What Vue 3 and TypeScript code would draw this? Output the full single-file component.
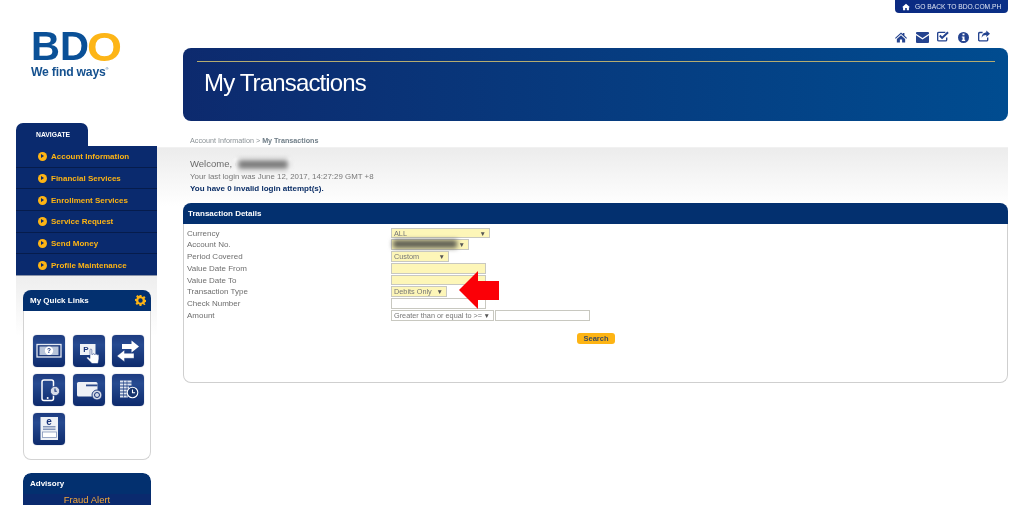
<script setup lang="ts">
// BDO online banking - My Transactions screen
const navItems: string[] = [
  'Account Information',
  'Financial Services',
  'Enrollment Services',
  'Service Request',
  'Send Money',
  'Profile Maintenance',
]

interface FormRow {
  label: string
  kind: 'select' | 'input' | 'hidden' | 'amount'
  value?: string
  width: number
  white?: boolean
}

const rows: FormRow[] = [
  { label: 'Currency', kind: 'select', value: 'ALL', width: 99 },
  { label: 'Account No.', kind: 'hidden', width: 78 },
  { label: 'Period Covered', kind: 'select', value: 'Custom', width: 58 },
  { label: 'Value Date From', kind: 'input', width: 95 },
  { label: 'Value Date To', kind: 'input', width: 95 },
  { label: 'Transaction Type', kind: 'select', value: 'Debits Only', width: 56 },
  { label: 'Check Number', kind: 'input', width: 95, white: true },
  { label: 'Amount', kind: 'amount', value: 'Greater than or equal to >=', width: 103, white: true },
]
</script>

<template>
  <div class="page">
    <div class="top-row">
      <a class="back-link">
        <svg class="back-icon" viewBox="0 0 12 10"><path d="M6 0 12 5.2H10.4V10H7.2V6.6H4.8V10H1.6V5.2H0Z" /></svg>
        GO BACK TO BDO.COM.PH
      </a>
    </div>

    <div class="layout">
      <aside class="left">
        <div class="logo">
          <svg class="logo-mark" viewBox="0 0 95 41">
            <text x="0" y="36" class="bd" textLength="58" lengthAdjust="spacingAndGlyphs">BD</text>
            <text x="56" y="36.500" class="o" textLength="35" lengthAdjust="spacingAndGlyphs">O</text>
          </svg>
          <div class="logo-tag">We find ways<sup>®</sup></div>
        </div>

        <div class="nav-tab">NAVIGATE</div>
        <ul class="nav">
          <li v-for="item in navItems" :key="item">
            <span class="bullet"></span>{{ item }}
          </li>
        </ul>

        <div class="left-panels">
          <section class="quick">
            <h3 class="side-head">
              My Quick Links
              <svg class="gear" viewBox="0 0 12 12">
                <path fill-rule="evenodd" d="M5 0h2l.3 1.7 1.2.5L10 1.2l1.4 1.4-1 1.5.5 1.2 1.700.3v2l-1.700.3-.5 1.200 1 1.500L10 10.800l-1.500-1-1.200.5L7 12H5l-.3-1.700-1.200-.5-1.500 1L.6 9.400l1-1.500-.5-1.200L0 6.400v-2l1.700-.2.5-1.200-1-1.500L2.600.1l1.500 1 .6 0ZM6 3.600a2.400 2.400 0 1 0 0 4.800 2.400 2.400 0 0 0 0-4.800Z" />
              </svg>
            </h3>
            <div class="tiles">
              <svg class="tile" viewBox="0 0 32 32">
                <rect x="4" y="9.500" width="24" height="12.500" fill="#1d3a7c" stroke="#e4e9f2" stroke-width="1.300" />
                <rect x="6.500" y="11.500" width="19" height="8.500" fill="#b7c4da" />
                <circle cx="16" cy="15.700" r="4.200" fill="#fff" />
                <text x="16" y="18.200" class="tile-q">?</text>
              </svg>
              <svg class="tile" viewBox="0 0 32 32">
                <rect x="7" y="9" width="15.500" height="11" fill="#eef1f6" />
                <text x="13" y="17" class="tile-p">P</text>
                <path d="M17 15c0-1.300 1.800-1.300 1.800 0v4.500l.9-.1c.3-1 1.600-.9 1.700 0l.8.1c.3-.9 1.500-.8 1.600.1l.7.2c.4-.6 1.400-.3 1.400.5v3.700L25 28.500h-6L14 23.500c-.9-1 .5-2.200 1.500-1.300l1.500 1.300Z" fill="#fff" stroke="#17337a" stroke-width=".5" />
              </svg>
              <svg class="tile" viewBox="0 0 32 32">
                <path d="M10 9h9.500V5.500L27 11.500l-7.500 6V14H10Z" fill="#fff" />
                <path d="M22 18.300h-9.500V15L5 21l7.500 5.800V23.300H22Z" fill="#fff" stroke="#1b3a7e" stroke-width=".4" />
              </svg>
              <svg class="tile" viewBox="0 0 32 32">
                <rect x="9" y="6" width="11.500" height="20.500" rx="2" fill="none" stroke="#fff" stroke-width="1.500" />
                <circle cx="14.700" cy="24" r="1" fill="#fff" />
                <circle cx="22" cy="17" r="4.700" fill="#d5dbe7" stroke="#17337a" stroke-width=".8" />
                <path d="M22 14.500v2.800h1.800" fill="none" stroke="#17337a" stroke-width="1.100" />
              </svg>
              <svg class="tile" viewBox="0 0 32 32">
                <rect x="4" y="8" width="20.500" height="14.500" rx="1.500" fill="#eef1f6" />
                <rect x="13" y="10.500" width="11.500" height="1.800" fill="#2c4a8a" />
                <circle cx="24" cy="21" r="5" fill="#d5dbe7" stroke="#17337a" stroke-width=".9" />
                <circle cx="24" cy="21" r="2.500" fill="none" stroke="#17337a" stroke-width="1" />
              </svg>
              <svg class="tile" viewBox="0 0 32 32">
                <path d="M8 7.500h11.500M8 10.500h11.500M8 13.500h9M8 16.500h7M8 19.500h7M8 22.500h8" stroke="#dfe5ef" stroke-width="2" />
                <path d="M11.500 6.500v17M15 6.500v17" stroke="#1d3a7c" stroke-width=".6" />
                <circle cx="20.500" cy="18.500" r="5.300" fill="#17356f" stroke="#fff" stroke-width="1.100" />
                <path d="M20.500 15.500v3.300h2.600" fill="none" stroke="#fff" stroke-width="1.100" />
              </svg>
              <svg class="tile" viewBox="0 0 32 32">
                <rect x="7.500" y="4" width="17.500" height="23" fill="#eef1f6" />
                <text x="16" y="11.500" class="tile-e">e</text>
                <rect x="10" y="13" width="12.500" height="1.500" fill="#8496b8" />
                <rect x="10" y="15.500" width="12.500" height="1.500" fill="#8496b8" />
                <rect x="9.500" y="19" width="14" height="5.500" fill="#fff" stroke="#8496b8" stroke-width=".8" />
              </svg>
            </div>
          </section>

          <section class="advisory">
            <h3 class="side-head">Advisory</h3>
            <div class="advisory-body">Fraud Alert</div>
          </section>
        </div>
      </aside>

      <main class="main">
        <div class="tools">
          <svg class="tool tool-home" viewBox="0 0 13 11"><path d="M6.500 0 8.500 1.800V.6h1.700v2.800L13 6l-.8.8-5.700-5-5.700 5L0 6ZM2 7 6.500 3 11 7v4H7.700V7.800H5.300V11H2Z" /></svg>
          <svg class="tool tool-mail" viewBox="0 0 13 11"><path d="M1 0h11a1 1 0 0 1 1 1v.8L6.500 6 0 1.800V1a1 1 0 0 1 1-1ZM0 3.300 6.500 7.500 13 3.300V10a1 1 0 0 1-1 1H1a1 1 0 0 1-1-1Z" /></svg>
          <svg class="tool tool-check" viewBox="0 0 13 11"><path d="M10.500 6.500V9a1.300 1.300 0 0 1-1.300 1.300H2A1.300 1.300 0 0 1 .7 9V2.300A1.300 1.300 0 0 1 2 1h7" fill="none" stroke="currentColor" stroke-width="1.500" /><path d="M3 4.500 5.500 7 12 1" fill="none" stroke="currentColor" stroke-width="2.200" /></svg>
          <svg class="tool tool-info" viewBox="0 0 11 11"><path fill-rule="evenodd" d="M5.500 0a5.500 5.500 0 1 1 0 11 5.500 5.500 0 0 1 0-11ZM4.500 1.600v1.700h2V1.600ZM3.800 4.400v1.100h.8v2.300h-.8v1.100h3.400V7.800h-.7V4.400Z" /></svg>
          <svg class="tool tool-share" viewBox="0 0 13 12"><path d="M10.500 7.500V10a1.300 1.300 0 0 1-1.300 1.300H2A1.300 1.300 0 0 1 .7 10V3.500A1.300 1.300 0 0 1 2 2.200h3" fill="none" stroke="currentColor" stroke-width="1.500" /><path d="M9 0l4 3.500L9 7V5C6.500 5 5 5.800 4 8c0-3.500 2-5.800 5-5.800Z" /></svg>
        </div>

        <div class="banner">
          <div class="banner-rule"></div>
          <h1>My Transactions</h1>
        </div>

        <div class="crumbs">Account Information &gt; <b>My Transactions</b></div>

        <div class="content">
          <div class="welcome">Welcome, c<span class="masked-name"><i></i></span></div>
          <div class="last-login">Your last login was June 12, 2017, 14:27:29 GMT +8</div>
          <div class="attempts">You have 0 invalid login attempt(s).</div>

          <section class="card">
            <h2>Transaction Details</h2>
            <div class="card-body">
              <div class="form">
                <template v-for="row in rows" :key="row.label">
                  <label>{{ row.label }}</label>
                  <div class="control">
                    <div
                      v-if="row.kind === 'input'"
                      class="field"
                      :class="{ white: row.white }"
                      :style="{ width: row.width + 'px' }"
                    ></div>
                    <div
                      v-else-if="row.kind === 'hidden'"
                      class="field pick"
                      :style="{ width: row.width + 'px' }"
                    >
                      <span class="masked-acct"></span><span class="caret">▼</span>
                    </div>
                    <template v-else>
                      <div
                        class="field pick"
                        :class="{ white: row.white }"
                        :style="{ width: row.width + 'px' }"
                      >
                        {{ row.value }}<span class="caret">▼</span>
                      </div>
                      <div v-if="row.kind === 'amount'" class="field white amount-input"></div>
                    </template>
                  </div>
                </template>
              </div>
              <div class="actions"><button type="button">Search</button></div>
            </div>

            <svg class="red-arrow" viewBox="0 0 40 38"><path d="M0 19 19 0V10H40V29H19V38Z" /></svg>
          </section>
        </div>
      </main>
    </div>
  </div>
</template>

<style scoped>
.page {
  width: 1024px;
  height: 505px;
  overflow: hidden;
  font-family: "Liberation Sans", Arial, sans-serif;
  background: #fff;
  filter: blur(0.3px);
}

.top-row {
  height: 13px;
  display: flex;
  justify-content: flex-end;
  padding-right: 16px;
}

.back-link {
  width: 113px;
  height: 13px;
  box-sizing: border-box;
  padding-left: 7px;
  display: flex;
  align-items: center;
  gap: 5px;
  background: linear-gradient(90deg, #0b2a82, #0a2f86);
  border-radius: 0 0 4px 4px;
  color: #dfe5f3;
  font-size: 6.700px;
  white-space: nowrap;
}

.back-icon {
  width: 8px;
  height: 8px;
  fill: #fff;
}

.layout {
  display: grid;
  grid-template-columns: 141px 851px;
  margin-left: 16px;
}

/* left column */
.logo {
  height: 110px;
  padding: 11px 0 0 15px;
  box-sizing: border-box;
}

.logo-mark {
  display: block;
  width: 95px;
  height: 41px;
  overflow: visible;
}

.bd,
.o {
  font-family: "Liberation Sans", Arial, sans-serif;
  font-weight: 700;
}

.bd {
  fill: #0a5097;
  font-size: 40px;
}

.o {
  fill: #fdb517;
  font-size: 41px;
}

.logo-tag {
  color: #15518f;
  font-size: 12.200px;
  font-weight: 700;
  letter-spacing: -0.2px;
  line-height: 14px;
}

.logo-tag sup {
  font-size: 4px;
  font-weight: 400;
  vertical-align: 6px;
  line-height: 0;
}

.nav-tab {
  width: 72px;
  height: 23px;
  background: #0a2a6e;
  border-radius: 7px 7px 0 0;
  color: #fff;
  font-size: 6.800px;
  font-weight: 700;
  line-height: 24px;
  padding-left: 20px;
  box-sizing: border-box;
}

.nav {
  list-style: none;
  margin: 0;
  padding: 0;
  background: #0a2a6e;
}

.nav li {
  height: 21.700px;
  box-sizing: border-box;
  padding: 1px 0 0 22px;
  display: flex;
  align-items: center;
  gap: 4px;
  color: #fdb414;
  font-size: 8px;
  font-weight: 700;
  border-bottom: 1px solid #061c4c;
}

.nav li:last-child {
  border-bottom: 1px solid #8a93a8;
}

.bullet {
  width: 9px;
  height: 9px;
  border-radius: 50%;
  background: #fdb414;
  position: relative;
}

.bullet::after {
  content: "";
  position: absolute;
  left: 3.200px;
  top: 1.800px;
  border-left: 3.800px solid #0a2a6e;
  border-top: 2.700px solid transparent;
  border-bottom: 2.700px solid transparent;
}

.left-panels {
  padding: 14px 6px 0 7px;
  background: linear-gradient(#eeeeee, #fff 60px);
}

.side-head {
  margin: 0;
  height: 21px;
  box-sizing: border-box;
  padding: 0 7px;
  display: flex;
  align-items: center;
  justify-content: space-between;
  background: #03306f;
  border-radius: 8px 8px 0 0;
  color: #fff;
  font-size: 8px;
  font-weight: 700;
}

.gear {
  width: 11px;
  height: 11px;
  fill: #fdb414;
  margin-right: -2px;
}

.tiles {
  height: 149px;
  box-sizing: border-box;
  background: #fff;
  border: 1px solid #d3d3d3;
  border-top: 0;
  border-radius: 0 0 8px 8px;
  display: grid;
  grid-template-columns: repeat(3, 32px);
  grid-auto-rows: 32px;
  column-gap: 7.500px;
  row-gap: 7px;
  padding: 24px 0 0 9px;
}

.tile {
  border-radius: 4px;
  background: linear-gradient(#1d3b80 0%, #264a90 30%, #0d2a6c 100%);
  box-shadow: 0 0 1px #5a6a90;
}

.tile-q,
.tile-p,
.tile-e {
  font-family: "Liberation Sans", Arial, sans-serif;
  font-weight: 700;
  text-anchor: middle;
  fill: #17337a;
}

.tile-q {
  font-size: 6.500px;
}

.tile-p {
  font-size: 8px;
}

.tile-e {
  font-size: 10px;
}

.advisory {
  margin-top: 13px;
  border-radius: 8px 8px 0 0;
  overflow: hidden;
}

.advisory-body {
  background: #0a2a6e;
  color: #f5a83a;
  text-align: center;
  font-size: 9.500px;
  line-height: 10px;
  padding-top: 1px;
}

/* right column */
.tools {
  height: 35px;
  box-sizing: border-box;
  padding: 17px 18px 0 0;
  display: flex;
  justify-content: flex-end;
  align-items: flex-start;
  gap: 9px;
}

.tool {
  width: 12px;
  height: 11px;
  color: #24438f;
  fill: #24438f;
}

.tool-home {
  margin-top: 2px;
}

.tool-mail {
  width: 13px;
  margin-top: 2px;
}

.tool-check {
  margin: 1px 0 0 -1px;
}

.tool-info {
  margin-top: 2px;
  width: 11px;
}

.tool-share {
  height: 12px;
}

.banner {
  margin-left: 26px;
  height: 73px;
  box-sizing: border-box;
  padding: 13px 13px 0 14px;
  background: linear-gradient(90deg, #0d2a6e, #004c90);
  border-radius: 8px;
}

.banner-rule {
  height: 1px;
  background: #b5ac70;
}

.banner h1 {
  margin: 7px 0 0 7px;
  color: #fff;
  font-size: 24px;
  font-weight: 400;
  letter-spacing: -0.850px;
  line-height: 28px;
}

.crumbs {
  height: 27px;
  box-sizing: border-box;
  padding: 14px 0 0 33px;
  font-size: 7.200px;
  line-height: 11px;
  color: #8b9296;
  border-bottom: 1px solid #f1f1f1;
}

.crumbs b {
  color: #6f7d87;
}

.content {
  padding: 9px 0 0 26px;
  background: linear-gradient(#ececec, #fff 58px);
}

.welcome {
  padding-left: 7px;
  color: #6a6a6a;
  font-size: 9.500px;
  line-height: 14px;
  display: flex;
  align-items: center;
  white-space: pre;
}

.masked-name {
  display: block;
  width: 57px;
  height: 13px;
  margin-left: -5px;
  background: #fff;
  filter: blur(0.8px);
  position: relative;
}

.masked-name i {
  position: absolute;
  left: 4px;
  top: 2px;
  width: 50px;
  height: 9px;
  background: #777;
  filter: blur(2.500px);
}

.last-login {
  padding-left: 7px;
  color: #777;
  font-size: 7.900px;
  line-height: 12px;
}

.attempts {
  padding-left: 7px;
  color: #0c2f67;
  font-size: 8px;
  font-weight: 700;
  line-height: 12px;
}

.card {
  position: relative;
  margin-top: 8px;
  height: 180px;
  border-radius: 8px;
}

.card h2 {
  margin: 0;
  height: 21px;
  box-sizing: border-box;
  padding-left: 5px;
  background: #03306f;
  border-radius: 8px 8px 0 0;
  color: #fff;
  font-size: 8px;
  font-weight: 700;
  line-height: 21px;
}

.card-body {
  height: 159px;
  box-sizing: border-box;
  background: #fff;
  border: 1px solid #cfcfcf;
  border-top: 0;
  border-radius: 0 0 8px 8px;
  padding: 3.500px 0 0 3px;
}

.form {
  display: grid;
  grid-template-columns: 204px 1fr;
  grid-auto-rows: 11.800px;
}

.form label {
  color: #6e6e6e;
  font-size: 8px;
  line-height: 11.800px;
}

.control {
  display: flex;
  gap: 1px;
  height: 11.800px;
}

.field {
  height: 10.800px;
  box-sizing: border-box;
  background: #fdf6b8;
  border: 1px solid #c8c8c0;
  color: #777;
  font-size: 7.300px;
  line-height: 9px;
  padding-left: 2px;
  white-space: nowrap;
  position: relative;
}

.field.white {
  background: #fff;
}

.caret {
  position: absolute;
  right: 3px;
  top: 0;
  font-size: 6.500px;
  color: #555;
}

.masked-acct {
  position: absolute;
  left: 1px;
  top: 0;
  width: 64px;
  height: 8px;
  background: #5a5a50;
  filter: blur(2.500px);
}

.amount-input {
  width: 95px;
}

.actions {
  display: flex;
  padding: 11px 0 0 390px;
}

.actions button {
  width: 38px;
  height: 11px;
  padding: 0;
  border: 0;
  border-radius: 3px;
  background: #fdb414;
  color: #3c4a5e;
  font-family: inherit;
  font-size: 7.500px;
  font-weight: 700;
  line-height: 11px;
}

.red-arrow {
  position: absolute;
  left: 276px;
  top: 68px;
  width: 40px;
  height: 38px;
  fill: #fb0007;
}
</style>

<style>
html,
body {
  overflow: hidden;
  background: #fff;
}
</style>
